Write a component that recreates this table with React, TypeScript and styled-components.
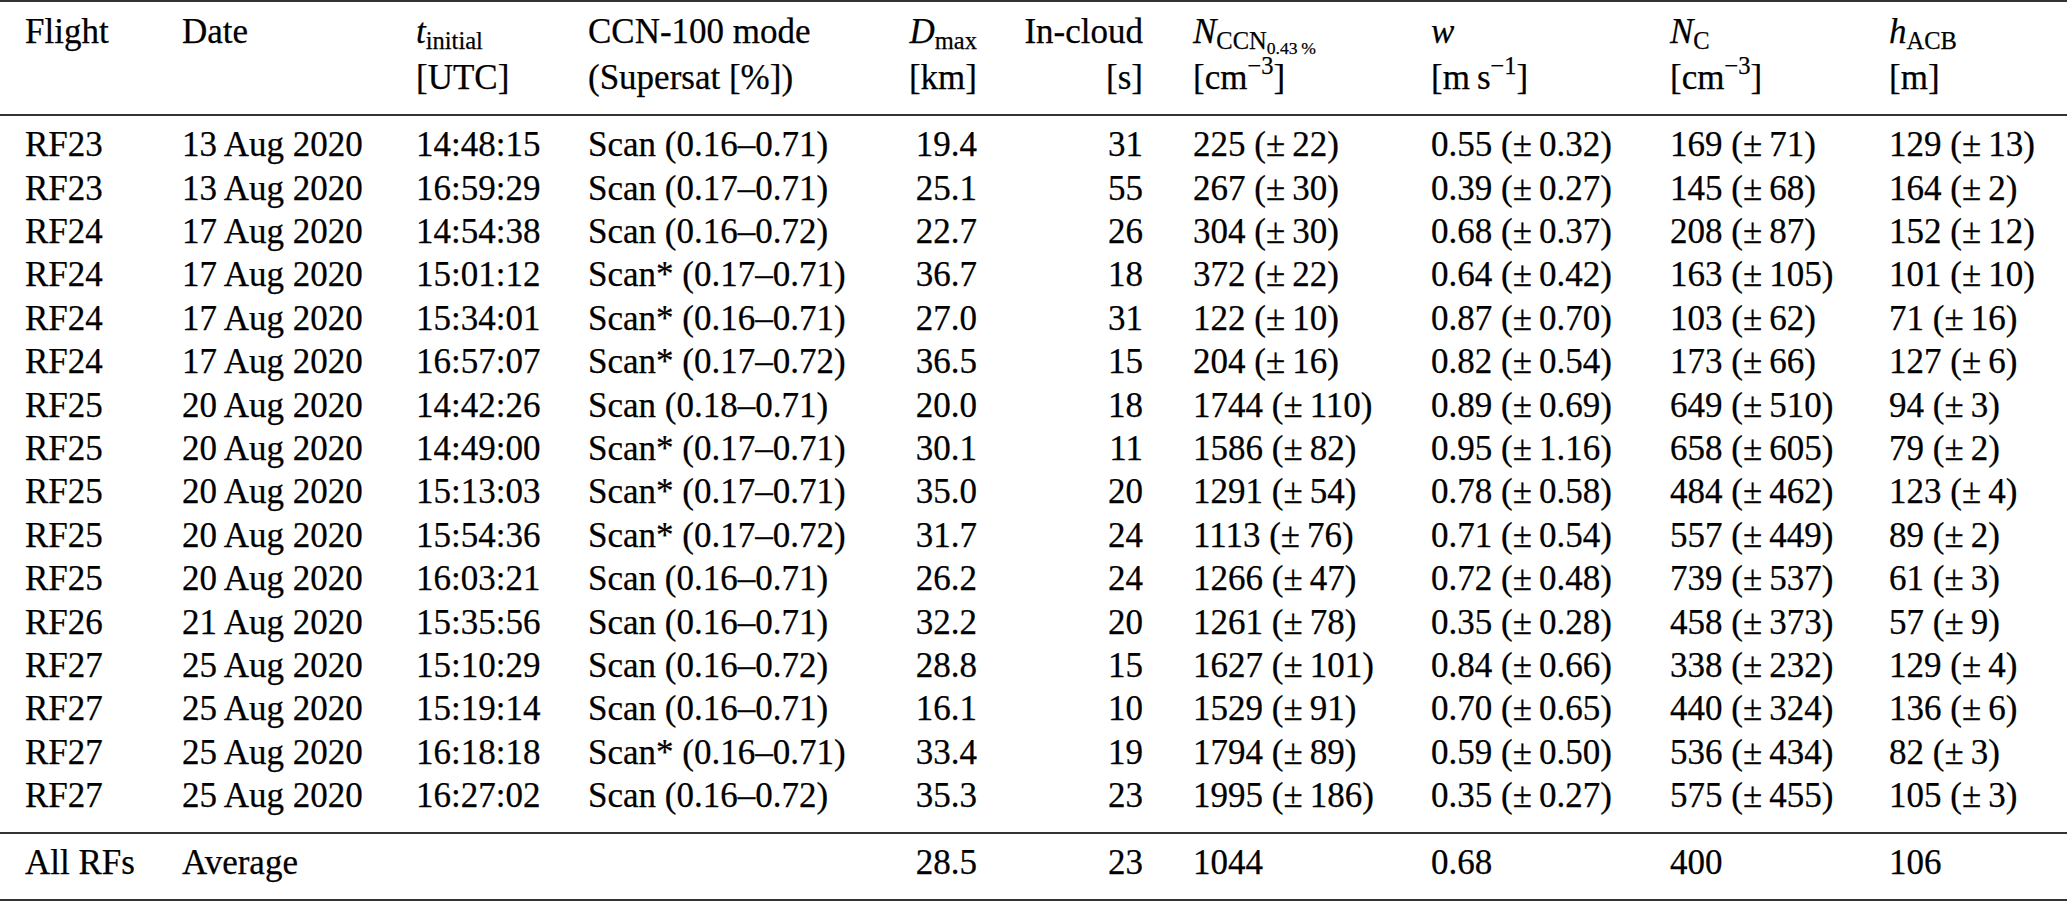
import React from 'react'

import styled, { createGlobalStyle } from 'styled-components'

const GlobalStyle = createGlobalStyle`
  html, body {
    margin: 0;
    padding: 0;
    background: #fff;
  }
`

const SERIF = `'Liberation Serif', 'Times New Roman', Times, serif`
const COLUMNS = '157px 234px 172px 292px 97px 166px 288px 239px 219px 1fr'
const RULE = '2px solid #333'

const Table = styled.div`
  width: 2067px;
  border-top: ${RULE};
  border-bottom: ${RULE};
  font-family: ${SERIF};
  font-size: 35px;
  color: #000;
  -webkit-text-stroke: 0.25px #000;
`

const Section = styled.div<{ $top: number; $bottom: number; $rule?: boolean }>`
  padding: ${({ $top }) => $top}px 0 ${({ $bottom }) => $bottom}px;
  border-bottom: ${({ $rule }) => ($rule ? RULE : 'none')};
`

const Row = styled.div<{ $lh: number }>`
  display: grid;
  grid-template-columns: ${COLUMNS};
  padding-left: 25px;
  line-height: ${({ $lh }) => $lh}px;
  white-space: nowrap;
`

const Cell = styled.div<{ $right?: boolean; $indent?: number }>`
  text-align: ${({ $right }) => ($right ? 'right' : 'left')};
  padding-left: ${({ $indent }) => $indent || 0}px;
`

const Line = styled.div`
  height: 46px;
`

const I = styled.i`
  font-style: italic;
`

const Sub = styled.span`
  font-size: 0.7em;
  line-height: 0;
  vertical-align: -6px;
  font-style: normal;
`

const SubSub = styled.span`
  font-size: 0.72em;
  line-height: 0;
  vertical-align: -5px;
`

const Sup = styled.span`
  font-size: 0.7em;
  line-height: 0;
  vertical-align: 15px;
`

const Pm = styled.span`
  margin-right: 0.2em;
`

type Col = { right?: boolean; indent?: number }

const cols: Col[] = [
  {},
  {},
  {},
  {},
  { right: true },
  { right: true },
  { indent: 50 },
  {},
  {},
  {},
]

const header: [React.ReactNode, React.ReactNode][] = [
  ['Flight', ''],
  ['Date', ''],
  [
    <>
      <I>t</I>
      <Sub>initial</Sub>
    </>,
    '[UTC]',
  ],
  ['CCN-100 mode', '(Supersat [%])'],
  [
    <>
      <I>D</I>
      <Sub>max</Sub>
    </>,
    '[km]',
  ],
  ['In-cloud', '[s]'],
  [
    <>
      <I>N</I>
      <Sub>
        CCN<SubSub>0.43{'\u2009'}%</SubSub>
      </Sub>
    </>,
    <>
      [cm<Sup>{'\u2212'}3</Sup>]
    </>,
  ],
  [
    <I>w</I>,
    <>
      [m{'\u2009'}s<Sup>{'\u2212'}1</Sup>]
    </>,
  ],
  [
    <>
      <I>N</I>
      <Sub>C</Sub>
    </>,
    <>
      [cm<Sup>{'\u2212'}3</Sup>]
    </>,
  ],
  [
    <>
      <I>h</I>
      <Sub>ACB</Sub>
    </>,
    '[m]',
  ],
]

const rows = [
  'RF23|13 Aug 2020|14:48:15|Scan (0.16–0.71)|19.4|31|225 22|0.55 0.32|169 71|129 13',
  'RF23|13 Aug 2020|16:59:29|Scan (0.17–0.71)|25.1|55|267 30|0.39 0.27|145 68|164 2',
  'RF24|17 Aug 2020|14:54:38|Scan (0.16–0.72)|22.7|26|304 30|0.68 0.37|208 87|152 12',
  'RF24|17 Aug 2020|15:01:12|Scan* (0.17–0.71)|36.7|18|372 22|0.64 0.42|163 105|101 10',
  'RF24|17 Aug 2020|15:34:01|Scan* (0.16–0.71)|27.0|31|122 10|0.87 0.70|103 62|71 16',
  'RF24|17 Aug 2020|16:57:07|Scan* (0.17–0.72)|36.5|15|204 16|0.82 0.54|173 66|127 6',
  'RF25|20 Aug 2020|14:42:26|Scan (0.18–0.71)|20.0|18|1744 110|0.89 0.69|649 510|94 3',
  'RF25|20 Aug 2020|14:49:00|Scan* (0.17–0.71)|30.1|11|1586 82|0.95 1.16|658 605|79 2',
  'RF25|20 Aug 2020|15:13:03|Scan* (0.17–0.71)|35.0|20|1291 54|0.78 0.58|484 462|123 4',
  'RF25|20 Aug 2020|15:54:36|Scan* (0.17–0.72)|31.7|24|1113 76|0.71 0.54|557 449|89 2',
  'RF25|20 Aug 2020|16:03:21|Scan (0.16–0.71)|26.2|24|1266 47|0.72 0.48|739 537|61 3',
  'RF26|21 Aug 2020|15:35:56|Scan (0.16–0.71)|32.2|20|1261 78|0.35 0.28|458 373|57 9',
  'RF27|25 Aug 2020|15:10:29|Scan (0.16–0.72)|28.8|15|1627 101|0.84 0.66|338 232|129 4',
  'RF27|25 Aug 2020|15:19:14|Scan (0.16–0.71)|16.1|10|1529 91|0.70 0.65|440 324|136 6',
  'RF27|25 Aug 2020|16:18:18|Scan* (0.16–0.71)|33.4|19|1794 89|0.59 0.50|536 434|82 3',
  'RF27|25 Aug 2020|16:27:02|Scan (0.16–0.72)|35.3|23|1995 186|0.35 0.27|575 455|105 3',
].map((r) => r.split('|'))

const footer = ['All RFs', 'Average', '', '', '28.5', '23', '1044', '0.68', '400', '106']

// "225 22" -> 225 (± 22)
function withError(text: string, i: number) {
  if (i < 6) return text
  const [value, err] = text.split(' ')
  return (
    <>
      {value} (<Pm>±</Pm>
      {err})
    </>
  )
}

export default function App() {
  return (
    <>
      <GlobalStyle />
      <Table>
        <Section $top={7.2} $bottom={12.8} $rule>
          <Row $lh={46}>
            {header.map(([top, bottom], i) => (
              <Cell key={i} $right={cols[i].right} $indent={cols[i].indent}>
                <Line>{top}</Line>
                <Line>{bottom}</Line>
              </Cell>
            ))}
          </Row>
        </Section>
        <Section $top={7.2} $bottom={14.4} $rule>
          {rows.map((row, r) => (
            <Row key={r} $lh={43.4}>
              {row.map((text, i) => (
                <Cell key={i} $right={cols[i].right} $indent={cols[i].indent}>
                  {withError(text, i)}
                </Cell>
              ))}
            </Row>
          ))}
        </Section>
        <Section $top={6.5} $bottom={15.1}>
          <Row $lh={43.4}>
            {footer.map((text, i) => (
              <Cell key={i} $right={cols[i].right} $indent={cols[i].indent}>
                {text}
              </Cell>
            ))}
          </Row>
        </Section>
      </Table>
    </>
  )
}
